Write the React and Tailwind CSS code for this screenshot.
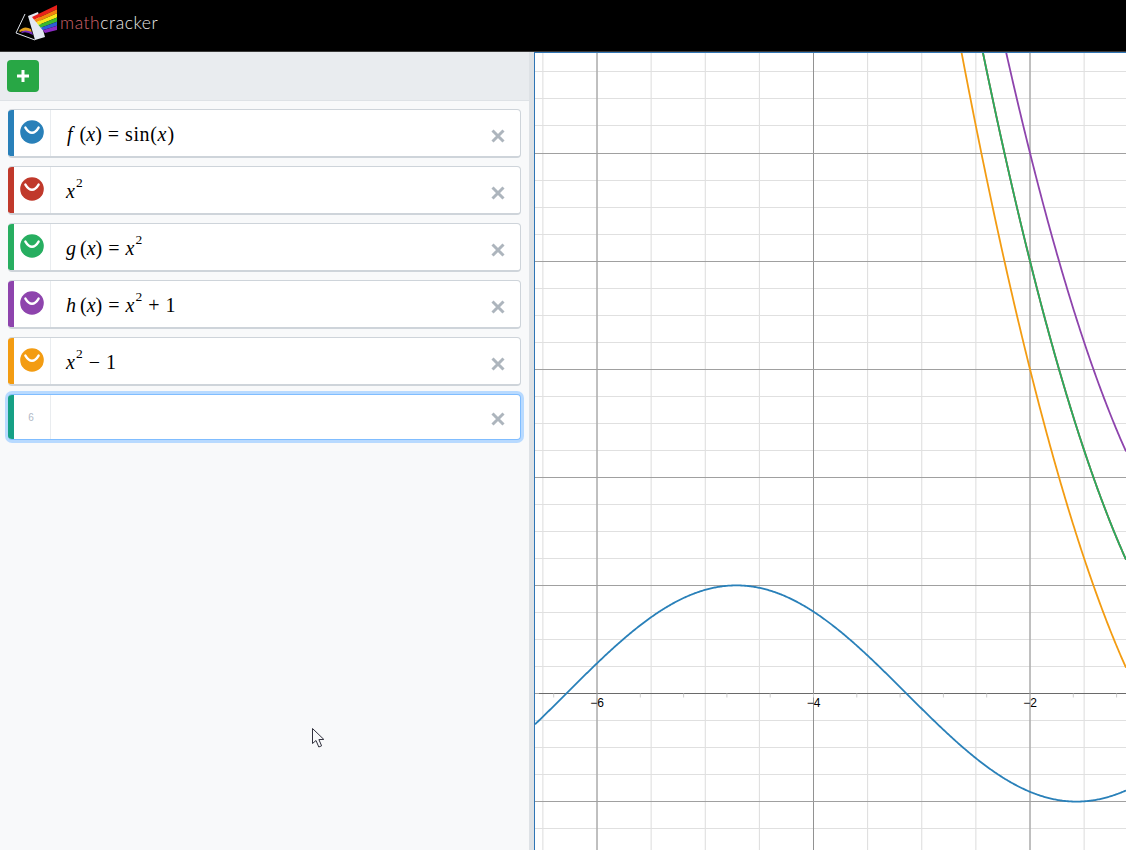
import React from "react";

const XO = 1246.5 - 535;
const YO = 693.5 - 52;
const U = 108.25;
const V = 108.1;
const W = 591;
const H = 798;
const px = (u) => XO + U * u;
const py = (v) => YO - V * v;
const snap = (y) => Math.floor(y) + 0.5;

function range(a, b, s) {
  const out = [];
  for (let i = Math.ceil(a / s); i * s <= b + 1e-9; i++) out.push(i * s);
  return out;
}

function curve(f) {
  const pts = [];
  for (let sx = 0; sx <= W; sx += 1) {
    const u = (sx - XO) / U;
    const y = py(f(u));
    if (y > -40 && y < H + 40) pts.push(`${pts.length ? "L" : "M"}${sx} ${y.toFixed(2)}`);
  }
  return pts.join(" ");
}

function Graph() {
  const minU = (0 - XO) / U;
  const maxU = (W - XO) / U;
  const minV = (YO - H) / V;
  const maxV = YO / V;
  return (
    <svg viewBox={`0 0 ${W} ${H}`} className="block w-full h-full">
      <rect width={W} height={H} fill="#ffffff" />
      {range(minU, maxU, 0.5).map((u) => (
        <line key={`vm${u}`} x1={px(u)} x2={px(u)} y1="0" y2={H} stroke="#dcdcdc" strokeWidth="1" />
      ))}
      {range(minV, maxV, 0.25).map((v) => (
        <line key={`hm${v}`} x1="0" x2={W} y1={snap(py(v))} y2={snap(py(v))} stroke="#e0e0e0" strokeWidth="1" />
      ))}
      {range(minU, maxU, 2).map((u) => (
        <line key={`vM${u}`} x1={px(u)} x2={px(u)} y1="0" y2={H} stroke="#929292" strokeWidth="1" />
      ))}
      {range(minV, maxV, 1).map((v) => (
        <line key={`hM${v}`} x1="0" x2={W} y1={snap(py(v))} y2={snap(py(v))} stroke="#a0a0a0" strokeWidth="1" />
      ))}
      <line x1="4" x2={W} y1={snap(py(0))} y2={snap(py(0))} stroke="#6a6a6a" strokeWidth="1.2" />
      {range(minU, maxU, 0.4).map((u) => (
        <line key={`t${u}`} x1={px(u)} x2={px(u)} y1={py(0)} y2={py(0) + 4} stroke="#cccccc" strokeWidth="1" />
      ))}
      {[-6, -4, -2].map((u) => (
        <text
          key={`l${u}`}
          x={px(u)}
          y={py(0) + 13.5}
          textAnchor="middle"
          fontSize="12"
          fontFamily="'Liberation Sans', Arial, sans-serif"
          fill="#000000"
        >
          {"\u2212" + Math.abs(u)}
        </text>
      ))}
      <path d={curve((x) => Math.sin(x))} fill="none" stroke="#2980b9" strokeWidth="1.8" />
      <path d={curve((x) => x * x)} fill="none" stroke="#c0392b" strokeWidth="1.8" />
      <path d={curve((x) => x * x)} fill="none" stroke="#27ae60" strokeWidth="1.8" />
      <path d={curve((x) => x * x + 1)} fill="none" stroke="#8e44ad" strokeWidth="1.8" />
      <path d={curve((x) => x * x - 1)} fill="none" stroke="#f39c12" strokeWidth="1.8" />
    </svg>
  );
}

const BANDS = ["#e8201a", "#f5840f", "#f7e51c", "#3bb82e", "#2d5fd6", "#8b2cc4"];

function Logo() {
  const lerp = (a, b, t) => a + (b - a) * t;
  return (
    <svg width="46" height="51" viewBox="13 0 46 51" className="block shrink-0">
      <path d="M25 14 L16 33 L35 40" fill="none" stroke="#dfe3ea" strokeWidth="1" />
      <path d="M19 31 Q24 25 31 29 L32 34 Q25 29 20 32 Z" fill="#e2a11e" />
      <path d="M21 32 Q25 29 32 32 L33 35 Q26 31 22 33 Z" fill="#7a2fc0" />
      <polygon points="28,16 38,12 45,37 35,40" fill="#e3e8f2" />
      {BANDS.map((c, i) => {
        const t0 = i / 6;
        const t1 = (i + 1) / 6;
        const pts = [
          [lerp(32, 45, t0), lerp(17, 33, t0)],
          [57, lerp(5, 30, t0)],
          [57, lerp(5, 30, t1)],
          [lerp(32, 45, t1), lerp(17, 33, t1)],
        ];
        return <polygon key={c} points={pts.map((p) => p.join(",")).join(" ")} fill={c} />;
      })}
    </svg>
  );
}

function Chevron({ color }) {
  return (
    <svg width="24" height="24" viewBox="0 0 24 24" className="block">
      <circle cx="12" cy="12" r="11.8" fill={color} />
      <path d="M5.4 7.6 Q8.5 12.8 12 12.8 Q15.5 12.8 18.6 7.6" fill="none" stroke="#ffffff" strokeWidth="2.4" strokeLinecap="round" />
    </svg>
  );
}

function Close() {
  return (
    <svg width="14" height="14" viewBox="0 0 14 14" className="block">
      <path d="M1.5 1.5 L12.5 12.5 M12.5 1.5 L1.5 12.5" stroke="#adb5bd" strokeWidth="3" />
    </svg>
  );
}

const I = ({ children }) => <span className="italic">{children}</span>;
const Sup = ({ children }) => <span className="text-[13.5px] relative top-[-7px] ml-[1px]">{children}</span>;
const Op = ({ children }) => <span className="mx-[6px]">{children}</span>;
const X2 = () => (
  <>
    <I>x</I>
    <Sup>2</Sup>
  </>
);

const rows = [
  {
    color: "#2980b9",
    math: (
      <>
        <span className="ml-[1px]">
          <I>f</I>
        </span>
        <span className="ml-[7px]">(</span>
        <I>x</I>)<Op>=</Op>
        <span className="tracking-[0.6px]">sin(</span>
        <I>x</I>
        <span className="ml-[1px]">)</span>
      </>
    ),
  },
  { color: "#c0392b", math: <X2 /> },
  {
    color: "#27ae60",
    math: (
      <>
        <I>g</I>
        <span className="ml-[4px]">(</span>
        <I>x</I>)<Op>=</Op>
        <X2 />
      </>
    ),
  },
  {
    color: "#8e44ad",
    math: (
      <>
        <I>h</I>
        <span className="ml-[4px]">(</span>
        <I>x</I>)<Op>=</Op>
        <X2 />
        <Op>+</Op>1
      </>
    ),
  },
  {
    color: "#f39c12",
    math: (
      <>
        <X2 />
        <Op>{"\u2212"}</Op>1
      </>
    ),
  },
];

function Row({ color, math, up }) {
  return (
    <div className="flex h-[49px] mb-2 bg-white rounded-[4px] border border-[#ced4da] border-b-2 border-l-0 overflow-hidden">
      <div className="w-[6px] shrink-0" style={{ backgroundColor: color }} />
      <div className="w-[37px] shrink-0 border-r border-[#e9ecef] flex items-start justify-center pt-[10px]">
        <Chevron color={color} />
      </div>
      <div className="flex-1 flex items-center pl-[15px] pt-[1px] text-[20px] text-black font-['Liberation_Serif',serif] whitespace-pre">
        {math}
      </div>
      <div className="w-[44px] shrink-0 flex items-center justify-center pt-[6px] pr-[1px]">
        <Close />
      </div>
    </div>
  );
}

export default function App() {
  return (
    <div className="relative w-[1126px] h-[850px] overflow-hidden flex flex-col font-['Liberation_Sans',sans-serif]">
      <header className="h-[52px] shrink-0 bg-black border-b border-[#3a3a3a] flex items-center pl-[13px]">
        <Logo />
        <span className="font-['Lato',sans-serif] font-light text-[17.5px] tracking-[0.55px] ml-[1px] mt-[-5px]">
          <span className="text-[#d0646c]">math</span>
          <span className="text-[#e8e8e8]">cracker</span>
        </span>
      </header>
      <div className="flex-1 flex min-h-0">
        <aside className="w-[529px] shrink-0 bg-[#f8f9fa] flex flex-col">
          <div className="h-[49px] shrink-0 bg-[#e9ecef] border-b border-[#dee2e6] flex items-center pl-[7px]">
            <button className="w-[32px] h-[32px] rounded-[4px] bg-[#28a745] flex items-center justify-center">
              <svg width="14" height="14" viewBox="0 0 14 14" className="block">
                <path d="M7 1 V13 M1 7 H13" stroke="#ffffff" strokeWidth="3" />
              </svg>
            </button>
          </div>
          <div className="pt-2 pl-2 pr-2">
            {rows.map((r, i) => (
              <Row key={i} color={r.color} math={r.math} />
            ))}
            <div className="flex h-[46px] mt-px bg-white rounded-[4px] border-y border-r border-[#80bdff] shadow-[0_0_0_3px_#b8daff] overflow-hidden">
              <div className="w-[6px] shrink-0 bg-[#16a085]" />
              <div className="w-[37px] shrink-0 border-r border-[#e9ecef] flex items-center justify-center pr-[2px] text-[10px] text-[#b0b8c6]">
                6
              </div>
              <div className="flex-1" />
              <div className="w-[44px] shrink-0 flex items-center justify-center pt-[3px] pr-[1px]">
                <Close />
              </div>
            </div>
          </div>
        </aside>
        <div className="w-[5px] shrink-0 bg-[#dee2e6]" />
        <main className="flex-1 min-w-0 border-l border-t border-[#2f75b5] bg-white overflow-hidden">
          <div className="w-[591px] h-[798px] -mt-px">
            <Graph />
          </div>
        </main>
      </div>
      <svg width="14" height="21" viewBox="0 0 14 21" className="absolute left-[312px] top-[728px]">
        <path d="M0.5 0.5 V15.5 L4 12.5 L6.8 19 L9.6 17.8 L6.9 11.6 L11.8 11.4 Z" fill="#f8f9fa" stroke="#30303c" strokeWidth="1" />
      </svg>
    </div>
  );
}
